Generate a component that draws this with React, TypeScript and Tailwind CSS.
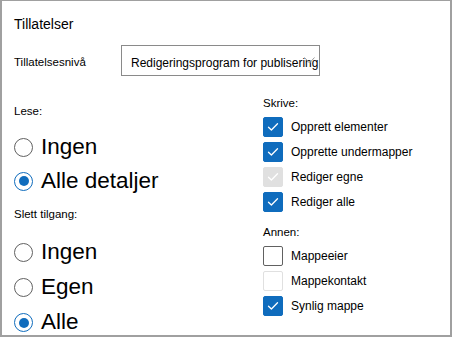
import React from 'react';

const font = { fontFamily: '"Liberation Sans", Arial, sans-serif' };

function Radio({ label, checked, tall }: { label: string; checked?: boolean; tall?: boolean }) {
  return (
    <div className={`flex items-center ${tall ? 'h-[35px]' : 'h-[34px]'}`}>
      <span
        className={`w-[19px] h-[19px] rounded-full border flex items-center justify-center shrink-0 ${
          checked ? 'border-[#0f6cbd] border-[1.5px]' : 'border-[#616161]'
        }`}
      >
        {checked && <span className="w-[10px] h-[10px] rounded-full bg-[#0f6cbd]" />}
      </span>
      <span className="ml-[8px] text-[22.5px] leading-none text-black">{label}</span>
    </div>
  );
}

type BoxState = 'checked' | 'disabled' | 'empty' | 'emptyDisabled';

function Check({ label, state }: { label: string; state: BoxState }) {
  const box =
    state === 'checked'
      ? 'bg-[#0f6cbd] border-[#0f6cbd]'
      : state === 'disabled'
      ? 'bg-[#e0e0e0] border-[#e0e0e0]'
      : state === 'empty'
      ? 'bg-white border-[#616161]'
      : 'bg-white border-[#e0e0e0]';
  return (
    <div className="flex items-center h-[25px]">
      <span className={`w-[20px] h-[20px] rounded-[2px] border flex items-center justify-center shrink-0 ${box}`}>
        {(state === 'checked' || state === 'disabled') && (
          <svg width="12" height="10" viewBox="0 0 12 10" fill="none">
            <path d="M1.5 5.2 L4.4 8 L10.5 1.8" stroke="white" strokeWidth="1.3" strokeLinecap="round" strokeLinejoin="round" />
          </svg>
        )}
      </span>
      <span className="ml-[8px] text-[12px] leading-none text-black">{label}</span>
    </div>
  );
}

export default function App() {
  return (
    <div
      style={font}
      className="relative w-[452px] h-[337px] overflow-hidden bg-white border-t border-l-2 border-r-2 border-b-2 border-[#a0a0a0] pl-[12px]"
    >
      {/* Title */}
      <div className="mt-[13px] h-[20px] flex items-center text-[14px] text-black">Tillatelser</div>

      {/* Permission level */}
      <div className="mt-[11px] flex items-center">
        <div className="w-[107px] pt-[4px] text-[11.5px] text-black">Tillatelsesnivå</div>
        <div className="relative w-[199px] h-[31px] border border-[#8a8a8a] overflow-hidden flex items-center pl-[9px] pt-[4px]">
          <span className="text-[12px] whitespace-nowrap text-black">Redigeringsprogram for publisering</span>
          <svg className="absolute left-[182px] top-[11px]" width="11" height="7" viewBox="0 0 11 7" fill="none">
            <path d="M0.5 0.5 L5.5 6 L10.5 0.5" stroke="#9a9a9a" strokeWidth="1" />
          </svg>
        </div>
      </div>

      {/* Columns */}
      <div className="mt-[20px] flex">
        <div className="w-[249px] pt-[8px]">
          <div className="h-[16px] flex items-center text-[11.5px] text-black">Lese:</div>
          <div className="mt-[10px]">
            <Radio label="Ingen" />
            <Radio label="Alle detaljer" checked />
          </div>
          <div className="mt-[9px] h-[16px] flex items-center text-[11.5px] text-black">Slett tilgang:</div>
          <div className="mt-[12px]">
            <Radio label="Ingen" tall />
            <Radio label="Egen" tall />
            <Radio label="Alle" checked tall />
          </div>
        </div>

        <div className="flex-1">
          <div className="h-[16px] flex items-center text-[11.5px] text-black">Skrive:</div>
          <div className="mt-[2px]">
            <Check label="Opprett elementer" state="checked" />
            <Check label="Opprette undermapper" state="checked" />
            <Check label="Rediger egne" state="disabled" />
            <Check label="Rediger alle" state="checked" />
          </div>
          <div className="mt-[11px] h-[16px] flex items-center text-[11.5px] text-black">Annen:</div>
          <div className="mt-[2px]">
            <Check label="Mappeeier" state="empty" />
            <Check label="Mappekontakt" state="emptyDisabled" />
            <Check label="Synlig mappe" state="checked" />
          </div>
        </div>
      </div>
    </div>
  );
}
